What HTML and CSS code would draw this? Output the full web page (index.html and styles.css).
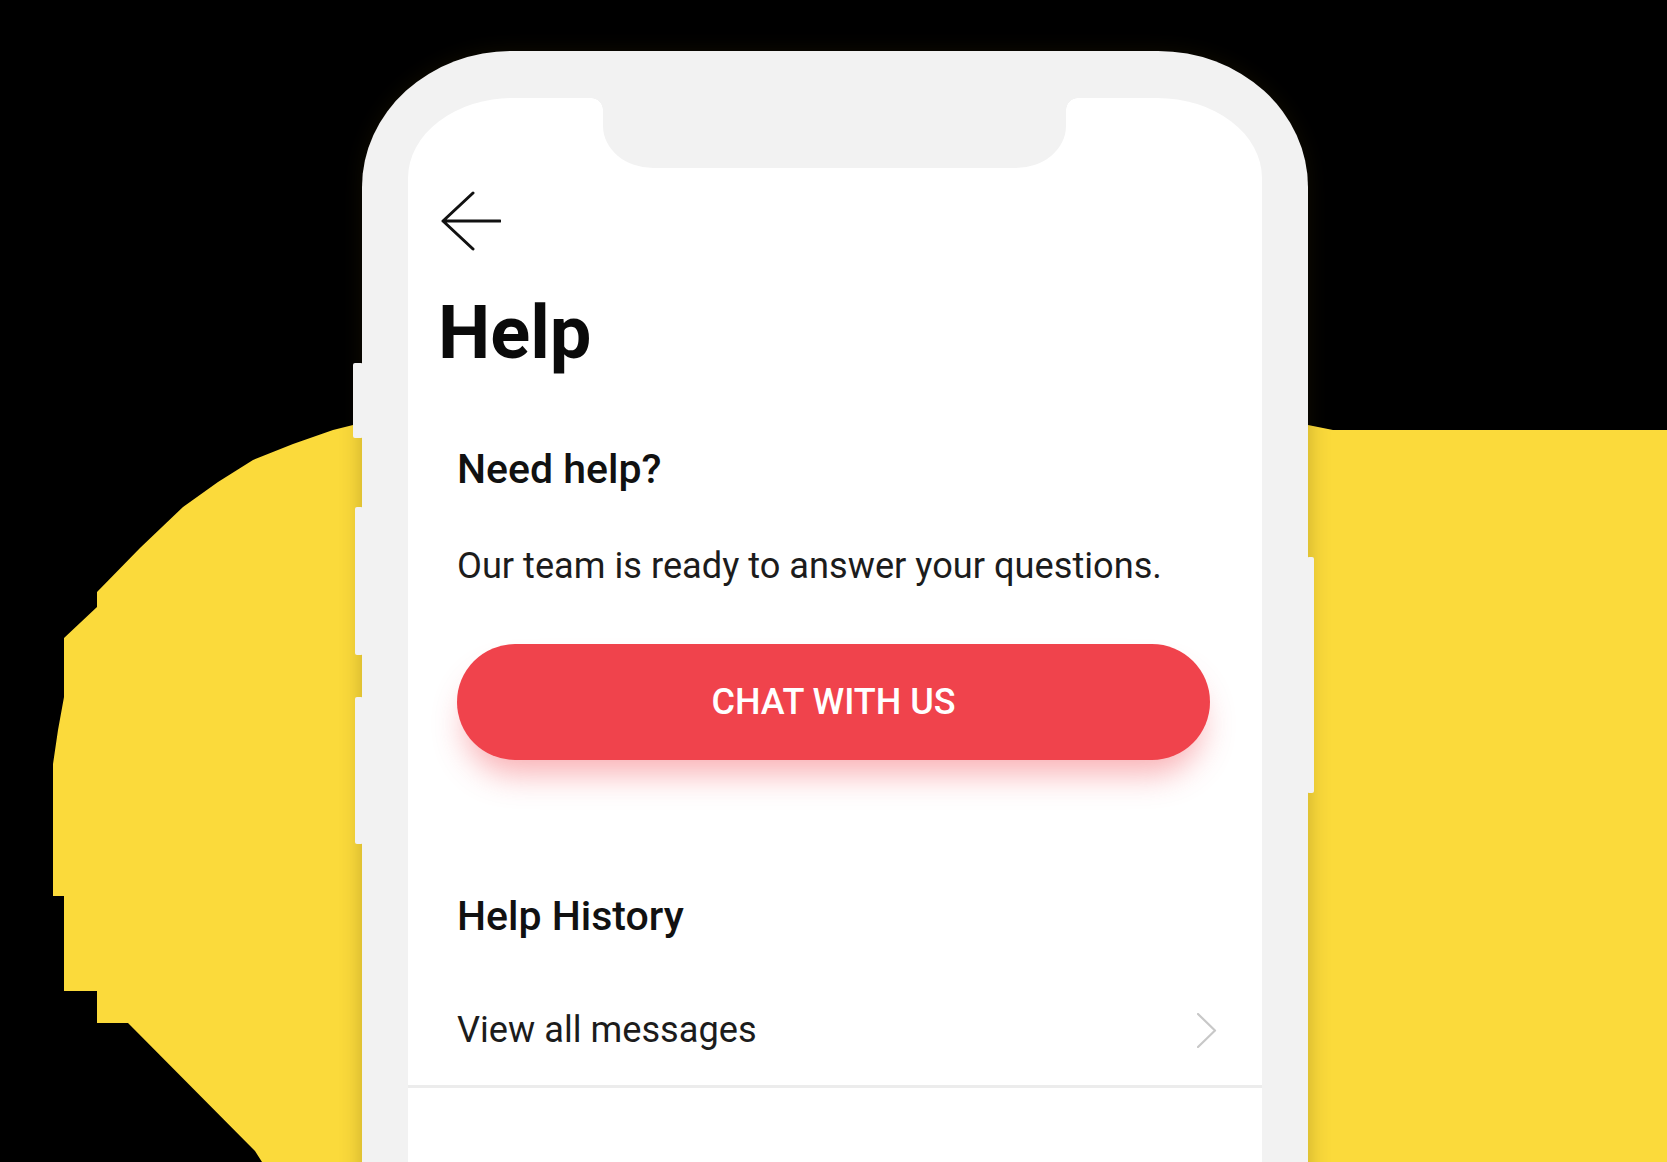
FILE: index.html
```html
<!DOCTYPE html>
<html lang="en">
<head>
<meta charset="utf-8">
<title>Help</title>
<link rel="stylesheet" href="styles.css">
</head>
<body>
<div class="stage">
  <div class="blob"></div>
  <div class="phone">
    <span class="side-btn side-btn--a"></span>
    <span class="side-btn side-btn--b"></span>
    <span class="side-btn side-btn--c"></span>
    <span class="side-btn side-btn--r"></span>
    <div class="screen">
      <div class="notch"></div>
      <button class="back" aria-label="Back">
        <svg width="60" height="60" viewBox="0 0 60 60" aria-hidden="true">
          <path d="M32 2 L2 30 L32 58 M2 30 L59 30" fill="none" stroke="#111" stroke-width="3" stroke-linecap="round" stroke-linejoin="round"/>
        </svg>
      </button>
      <h1 class="title">Help</h1>
      <section class="need">
        <h2 class="section-title">Need help?</h2>
        <p class="lead">Our team is ready to answer your questions.</p>
        <a class="cta" href="#">CHAT WITH US</a>
      </section>
      <section class="history">
        <h2 class="section-title section-title--history">Help History</h2>
      </section>
      <a class="row" href="#">
        <span class="row-label">View all messages</span>
        <svg class="chevron" width="20" height="35" viewBox="0 0 20 35" aria-hidden="true">
          <path d="M1 1 L18 17.5 L1 34" fill="none" stroke="#c8c8c8" stroke-width="2.2" stroke-linecap="round" stroke-linejoin="round"/>
        </svg>
      </a>
    </div>
  </div>
</div>
</body>
</html>
```
FILE: styles.css
```css
* { box-sizing: border-box; }

html, body {
  margin: 0;
  padding: 0;
  background: #000;
}

body {
  font-family: Roboto, "Liberation Sans", Arial, sans-serif;
  color: #141414;
}

.stage {
  position: relative;
  width: 1667px;
  height: 1162px;
  overflow: hidden;
  background: #000;
  padding: 51px 0 0 362px;
}

.blob {
  position: absolute;
  inset: 0;
  background: #fbda3b;
  clip-path: polygon(
    353px 425px, 333px 430px, 293px 444px, 253px 460px, 218px 482px,
    183px 507px, 140px 548px, 97px 592px, 97px 607px, 64px 638px,
    64px 697px, 58px 730px, 53px 764px, 53px 896px, 64px 896px,
    64px 991px, 97px 991px, 97px 1023px, 128px 1023px, 255px 1151px,
    262px 1162px, 1667px 1162px, 1667px 430px, 1333px 430px, 1308px 425px
  );
}

.phone {
  position: relative;
  z-index: 1;
  width: 946px;
  height: 1240px;
  padding: 47px 46px 0 46px;
  background: #f2f2f2;
  border-radius: 150px 150px 0 0 / 136px 136px 0 0;
  box-shadow: 0 0 22px rgba(60, 45, 0, 0.28);
}

.side-btn {
  position: absolute;
  background: #f2f2f2;
  border-radius: 2px;
}
.side-btn--a { left: -9px; top: 312px; width: 10px; height: 75px; }
.side-btn--b { left: -7px; top: 456px; width: 8px; height: 148px; }
.side-btn--c { left: -7px; top: 646px; width: 8px; height: 147px; }
.side-btn--r { right: -6px; top: 506px; width: 7px; height: 236px; }

.screen {
  position: relative;
  height: 100%;
  background: #fff;
  border-radius: 105px 105px 0 0 / 80px 80px 0 0;
  display: flex;
  flex-direction: column;
}

.notch {
  position: absolute;
  top: 0;
  left: 195px;
  width: 463px;
  height: 70px;
  background: #f2f2f2;
  border-radius: 0 0 50px 50px / 0 0 42px 42px;
}
.notch::before,
.notch::after {
  content: "";
  position: absolute;
  top: 0;
  width: 12px;
  height: 12px;
}
.notch::before {
  left: -12px;
  background: radial-gradient(circle at 0 100%, transparent 11.5px, #f2f2f2 12px);
}
.notch::after {
  right: -12px;
  background: radial-gradient(circle at 100% 100%, transparent 11.5px, #f2f2f2 12px);
}

.back {
  align-self: flex-start;
  margin: 93px 0 0 33px;
  padding: 0;
  width: 60px;
  height: 60px;
  border: 0;
  background: none;
  display: block;
}
.back svg { display: block; }

.title {
  margin: 42px 0 0 30px;
  font-size: 74px;
  line-height: 80px;
  font-weight: 700;
  color: #0a0a0a;
}

.need {
  display: flex;
  flex-direction: column;
  padding: 0 52px 0 49px;
}

.section-title {
  margin: 72px 0 0;
  font-size: 41px;
  line-height: 48px;
  font-weight: 500;
  color: #111;
}

.lead {
  margin: 51px 0 0;
  font-size: 36.2px;
  line-height: 44px;
  font-weight: 400;
  color: #1c1c1c;
}

.cta {
  margin: 56px 0 0;
  height: 116px;
  border-radius: 58px;
  background: #f0434c;
  color: #fff;
  text-decoration: none;
  font-size: 36px;
  font-weight: 500;
  display: flex;
  align-items: center;
  justify-content: center;
  box-shadow: 0 22px 32px -8px rgba(240, 67, 76, 0.42);
}

.history {
  padding: 0 52px 0 49px;
}
.section-title--history {
  margin-top: 132px;
}

.row {
  margin-top: 34px;
  padding: 34px 45px 33px 49px;
  display: flex;
  align-items: center;
  justify-content: space-between;
  text-decoration: none;
  border-bottom: 3px solid #ececec;
}

.row-label {
  font-size: 36.2px;
  line-height: 44px;
  color: #1c1c1c;
}

.chevron { display: block; }
```
